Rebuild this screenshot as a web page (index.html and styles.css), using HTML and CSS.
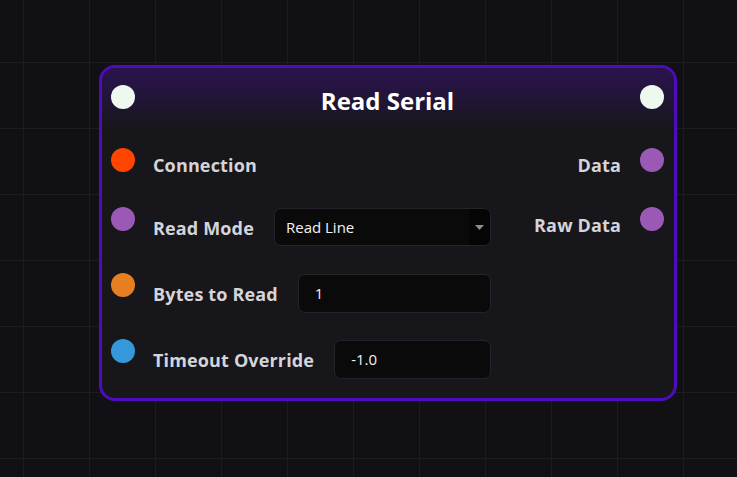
FILE: index.html
```html
<!DOCTYPE html>
<html>
<head>
<meta charset="utf-8">
<link rel="stylesheet" href="styles.css">
</head>
<body>
<div class="canvas">
  <div class="node">
    <div class="node-header">
      <span class="socket socket-exec"></span>
      <div class="node-title">Read Serial</div>
      <span class="socket socket-exec"></span>
    </div>
    <div class="node-body">
      <div class="row row-short">
        <div class="left">
          <span class="socket socket-conn"></span>
          <span class="label">Connection</span>
        </div>
        <div class="right">
          <span class="label">Data</span>
          <span class="socket socket-str"></span>
        </div>
      </div>
      <div class="row">
        <div class="left">
          <span class="socket socket-str"></span>
          <span class="label">Read Mode</span>
          <div class="widget select">
            <span class="widget-text">Read Line</span>
            <span class="select-arrow"><svg width="9" height="5" viewBox="0 0 9 5"><path d="M0 0H9L4.5 5Z" fill="#8d8d92"/></svg></span>
          </div>
        </div>
        <div class="right">
          <span class="label">Raw Data</span>
          <span class="socket socket-str"></span>
        </div>
      </div>
      <div class="row">
        <div class="left">
          <span class="socket socket-int"></span>
          <span class="label">Bytes to Read</span>
          <div class="widget input"><span class="widget-text">1</span></div>
        </div>
      </div>
      <div class="row">
        <div class="left">
          <span class="socket socket-float"></span>
          <span class="label">Timeout Override</span>
          <div class="widget input"><span class="widget-text">-1.0</span></div>
        </div>
      </div>
    </div>
  </div>
</div>
</body>
</html>
```
FILE: styles.css
```css
html, body {
  margin: 0;
  padding: 0;
  width: 737px;
  height: 477px;
  overflow: hidden;
}
body {
  background-color: #111115;
  font-family: "Open Sans", "Noto Sans", sans-serif;
}
.canvas {
  position: relative;
  width: 737px;
  height: 477px;
  background-color: #111115;
  background-image:
    linear-gradient(to right, #1c1c21 1px, transparent 1px),
    linear-gradient(to bottom, #1c1c21 1px, transparent 1px);
  background-size: 66px 66px;
  background-position: 23px -4px;
}
.node {
  position: absolute;
  left: 99px;
  top: 65px;
  width: 572px;
  height: 330px;
  border: 3px solid #4d0cbf;
  border-radius: 16px;
  background: rgba(24, 23, 28, 0.93);
  overflow: hidden;
  display: flex;
  flex-direction: column;
}
.node-header {
  height: 61px;
  box-sizing: border-box;
  padding: 17px 10px 0 9px;
  display: flex;
  align-items: flex-start;
  background: linear-gradient(to bottom, #2b124d 0%, #22153a 45%, rgba(24,23,28,0) 100%);
}
.node-title {
  flex: 1;
  text-align: center;
  color: #ffffff;
  font-weight: 700;
  font-size: 24px;
  line-height: 32px;
  margin-top: 0px;
}
.socket {
  width: 24px;
  height: 24px;
  border-radius: 50%;
  flex: none;
  display: block;
}
.socket-exec { background: #eff8ef; }
.socket-conn { background: #ff4500; }
.socket-str { background: #9b59b6; }
.socket-int { background: #e67e22; }
.socket-float { background: #3498db; }
.node-body {
  padding: 19px 10px 20px 9px;
  display: flex;
  flex-direction: column;
  gap: 28px;
}
.row {
  height: 38px;
  display: flex;
  justify-content: space-between;
}
.row-short { height: 32px; }
.row .socket { margin-top: -1px; }
.row-short .socket { margin-top: 0; }
.left {
  width: 380px;
  display: flex;
  align-items: center;
}
.left .socket { align-self: flex-start; margin-right: 18px; }
.right {
  display: flex;
  align-items: center;
}
.right .socket { align-self: flex-start; margin-left: 19px; }
.label {
  color: #d4d4d9;
  font-weight: 700;
  font-size: 18px;
  letter-spacing: 0.15px;
  white-space: nowrap;
  margin-top: 2px;
}
.row-short .label { margin-top: 1px; }
.right .label { margin-top: -5px; }
.row-short .right .label { margin-top: 1px; }
.widget {
  flex: 1;
  margin-left: 20px;
  height: 38px;
  box-sizing: border-box;
  border: 1px solid #242428;
  border-radius: 7px;
  background: #0a0a0b;
  display: flex;
  align-items: center;
  overflow: hidden;
}
.input { height: 39px; }
.widget-text {
  flex: 1;
  color: #f2f2f2;
  font-size: 15px;
  padding-left: 16px;
  white-space: nowrap;
}
.select .widget-text { padding-left: 11px; }
.select-arrow {
  width: 21px;
  height: 100%;
  background: #050506;
  display: flex;
  align-items: center;
  justify-content: center;
}
```
